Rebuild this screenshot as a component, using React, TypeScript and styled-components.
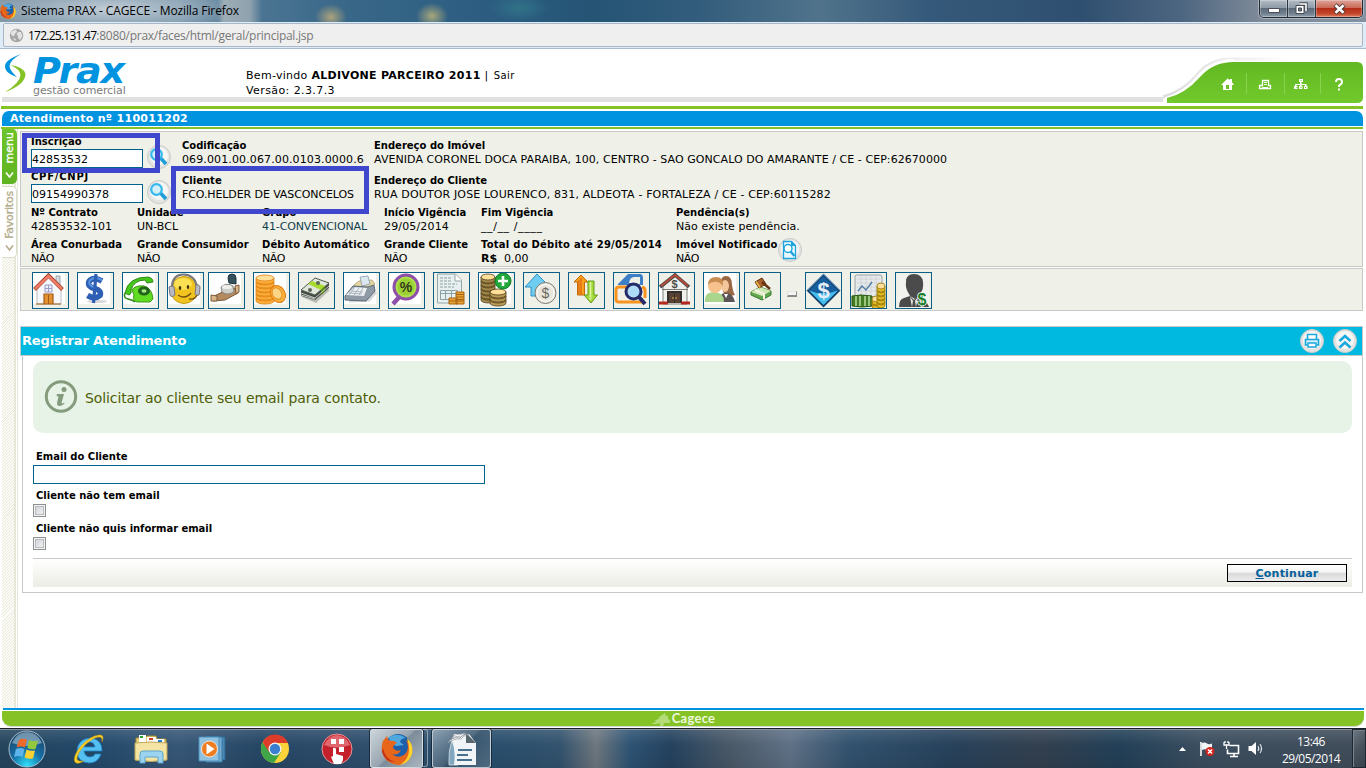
import React from "react";
import styled, { createGlobalStyle } from "styled-components";

const Global = createGlobalStyle`
  * { box-sizing: border-box; }
  body { margin: 0; background: #fff; overflow: hidden; }
  button, input { font: inherit; margin: 0; }
`;

const sans = `"DejaVu Sans", Verdana, sans-serif`;
const segoe = `"Open Sans", "Segoe UI", sans-serif`;

const Screen = styled.div`
  width: 1366px;
  height: 768px;
  display: flex;
  flex-direction: column;
  background: #fff;
  font: 11px/14px ${sans};
  color: #000;
  overflow: hidden;
`;

/* ---------- window chrome ---------- */

const TitleBar = styled.header`
  height: 22px;
  flex: none;
  display: flex;
  align-items: flex-start;
  justify-content: space-between;
  padding-right: 3px;
  background:
    radial-gradient(ellipse 130px 22px at 110px 9px, rgba(205, 214, 222, 0.85), rgba(170, 190, 205, 0.5) 60%, transparent),
    linear-gradient(90deg, transparent 218px, rgba(205, 205, 200, 0.55) 224px, rgba(200, 202, 200, 0.5) 250px, transparent 262px),
    radial-gradient(ellipse 16px 13px at 331px 17px, rgba(190, 172, 122, 0.85), transparent),
    radial-gradient(ellipse 16px 13px at 432px 16px, rgba(196, 184, 120, 0.8), transparent),
    radial-gradient(ellipse 30px 14px at 520px 8px, rgba(52, 125, 140, 0.7), transparent),
    linear-gradient(90deg, #8296a4 0, #7e97a9 180px, #4b7492 262px, #386788 350px, #2b5c80 500px, #255475 590px, #335d7c 700px, #50738b 820px, #35597a 930px, #2f4f70 1080px, #4c6580 1180px, #7e8a98 1260px, #8491a0 100%);
`;

const WindowTitle = styled.div`
  display: flex;
  align-items: center;
  gap: 5px;
  height: 21px;
  font: 12px/20px ${segoe};
  letter-spacing: -0.11px;
`;

const WindowButtons = styled.div`
  display: flex;
  height: 18px;
  border: 1px solid #1f2a35;
  border-top: 0;
  border-radius: 0 0 5px 5px;
  overflow: hidden;
  box-shadow: 0 0 0 1px rgba(255, 255, 255, 0.35);
`;

const WinButton = styled.button<{ $w: number; $close?: boolean }>`
  width: ${(p) => p.$w}px;
  padding: 0;
  display: flex;
  align-items: center;
  justify-content: center;
  border: 0;
  border-left: ${(p) => (p.$w === 27 ? "0" : "1px solid #2b3642")};
  box-shadow: inset 0 0 0 1px rgba(255, 255, 255, 0.28);
  background: ${(p) =>
    p.$close
      ? "linear-gradient(#dda59b 0, #cb6a58 45%, #b52d17 50%, #c4462a 80%, #dd8060)"
      : "linear-gradient(#b3bcc6 0, #8f9ba8 45%, #5d6a79 50%, #71808f 80%, #93a2b0)"};
`;

const UrlBar = styled.div`
  height: 27px;
  flex: none;
  padding: 1px 3px 2px;
  background: #dfebf7;
  border-bottom: 1px solid #a9bccd;
`;

const UrlField = styled.div`
  height: 24px;
  display: flex;
  align-items: center;
  gap: 4px;
  padding: 1px 0 0 5px;
  border: 1px solid #a6b8c7;
  border-radius: 2px;
  background: #efefef;
  color: #777;
  font: 12px/22px ${segoe};
  letter-spacing: -0.27px;
`;

const Host = styled.span`
  color: #000;
  letter-spacing: -0.75px;
`;

/* ---------- application header ---------- */

const AppHeader = styled.header`
  height: 54px;
  flex: none;
  display: flex;
  background: linear-gradient(#e0e0e0, #e0e0e0) 2px 48px / 1161px 5px no-repeat;
`;

const Logo = styled.div`
  width: 246px;
  display: flex;
  padding: 4px 0 0 4px;
`;

const Brand = styled.div`
  display: flex;
  flex-direction: column;
  padding-left: 5px;
`;

const BrandName = styled.div`
  height: 31px;
  font: italic 700 36px/35px ${sans};
  letter-spacing: -1.2px;
  transform: scaleX(1.06);
  transform-origin: left;
  color: #0093df;
`;

const BrandSub = styled.div`
  font-size: 11px;
  line-height: 14px;
  letter-spacing: -0.1px;
  color: #7c7c7c;
`;

const Welcome = styled.div`
  flex: 1;
  padding-top: 19px;
  line-height: 15px;
`;

const Spaced = styled.span<{ $ls?: number }>`
  letter-spacing: ${(p) => p.$ls ?? 0}px;
`;

const Strong = styled.b<{ $ls?: number }>`
  letter-spacing: ${(p) => p.$ls ?? 0}px;
`;

const SmallLink = styled.a`
  font-size: 10px;
  letter-spacing: 0.4px;
  margin-left: 1px;
`;

const HeaderArt = styled.svg`
  width: 206px;
  height: 54px;
  flex: none;
`;

const GreenRule = styled.div<{ $top?: number; $h: number }>`
  height: ${(p) => p.$h}px;
  flex: none;
  margin: ${(p) => p.$top ?? 0}px 3px 0 1px;
  background: #85c226;
`;

const CallBar = styled.h1`
  height: 15px;
  flex: none;
  margin: 2px 3px 0 2px;
  padding-left: 8px;
  border-radius: 7px 7px 0 0;
  background: #0093df;
  color: #fff;
  font: 700 11px/16px ${sans};
  letter-spacing: 0.3px;
`;

const Workspace = styled.div`
  flex: 1;
  min-height: 0;
  display: flex;
  padding-right: 3px;
`;

const SideBar = styled.nav`
  width: 18px;
  flex: none;
  padding-left: 2px;
  background:
    linear-gradient(90deg, #fff 2px, transparent 2px, transparent 14px, #e7e7d9 14px, #e7e7d9 16px, #fff 16px, #fff 17px, #e7e7d9 17px),
    repeating-linear-gradient(135deg, #fbfbf7 0, #fbfbf7 1.4px, #e9e8db 1.4px, #e9e8db 2.1px);
`;

const SideTab = styled.div<{ $active?: boolean }>`
  width: 15px;
  height: ${(p) => (p.$active ? 55 : 72)}px;
  margin-top: ${(p) => (p.$active ? 0 : 2)}px;
  display: flex;
  align-items: center;
  justify-content: flex-end;
  padding-bottom: ${(p) => (p.$active ? 5 : 5)}px;
  gap: ${(p) => (p.$active ? 8 : 5)}px;
  flex-direction: column;
  border: ${(p) => (p.$active ? "0" : "1px solid #dcdccb")};
  border-left: 0;
  border-radius: 0 5px 5px 0;
  background: ${(p) => (p.$active ? "linear-gradient(#6dc427, #5fb321)" : "#fff")};
  color: ${(p) => (p.$active ? "#fff" : "#b3ab8a")};
`;

const Vertical = styled.span<{ $ls: number; $size?: number }>`
  writing-mode: vertical-rl;
  transform: rotate(180deg);
  font-size: ${(p) => p.$size ?? 11}px;
  line-height: 13px;
  letter-spacing: ${(p) => p.$ls}px;
  -webkit-text-stroke: 0.3px;
`;

const Main = styled.main`
  flex: 1;
  padding: 2px 0 0 2px;
  min-width: 0;
`;

/* ---------- client panel ---------- */

const ClientPanel = styled.section`
  position: relative;
  height: 136px;
  padding: 2px 0 0 10px;
  border: 1px solid #c8c8c8;
  background: #eff0e8;
`;

const LookupRow = styled.div`
  display: flex;
  height: 35px;
`;

const LookupCell = styled.div`
  width: 151px;
  display: flex;
`;

const Field = styled.div<{ $w?: number; $top?: number }>`
  width: ${(p) => (p.$w ? p.$w + "px" : "auto")};
  padding-top: ${(p) => p.$top ?? 0}px;
  flex: none;
  white-space: nowrap;
`;

const Label = styled.div<{ $ls?: number }>`
  font-weight: 700;
  font-size: 10px;
  height: 14px;
  line-height: 14px;
  letter-spacing: ${(p) => p.$ls ?? 0}px;
`;

const Value = styled.div<{ $ls?: number; $teal?: boolean }>`
  height: 14px;
  line-height: 14px;
  letter-spacing: ${(p) => p.$ls ?? 0}px;
  color: ${(p) => (p.$teal ? "#12404c" : "#000")};
`;

const TextInput = styled.input<{ $w: number; $gap?: number }>`
  display: block;
  width: ${(p) => p.$w}px;
  height: 19px;
  margin-top: ${(p) => p.$gap ?? 0}px;
  padding: 2px 0 0;
  border: 1px solid #00628f;
  background: #fff;
  font: 11px/14px ${sans};
`;

const RoundButton = styled.button<{ $size: number }>`
  width: ${(p) => p.$size}px;
  height: ${(p) => p.$size}px;
  padding: 0;
  border: 0;
  background: none;
  display: block;
`;

const LookupSpacer = styled.div`
  padding: 11px 0 0 4px;
`;

const InfoRow = styled.div`
  display: flex;
  height: 32px;
`;

const LookupRows = styled.div`
  height: 72px;
`;

const Inline = styled.div`
  display: flex;
  align-items: flex-start;
  height: 28px;
`;

const Mark = styled.div<{ $x: number; $y: number; $w: number; $h: number }>`
  position: absolute;
  left: ${(p) => p.$x}px;
  top: ${(p) => p.$y}px;
  width: ${(p) => p.$w}px;
  height: ${(p) => p.$h}px;
  border: 5px solid #3f48cc;
`;

/* ---------- tool strip ---------- */

const ToolStrip = styled.section`
  height: 43px;
  margin-top: 1px;
  padding: 3px 0 0 11px;
  display: flex;
  border: 1px solid #c8c8c8;
  background: #eff0e8;
`;

const ToolButton = styled.button<{ $gap?: number }>`
  width: 37px;
  height: 37px;
  padding: 0;
  margin-right: ${(p) => p.$gap ?? 8}px;
  border: 1px solid #0b5f86;
  background: #eff0e8;
  display: block;
`;

const MissingTool = styled.i`
  width: 10px;
  height: 6px;
  margin: 19px 8px 0 2px;
  background: #f4f4f0;
  border: 1px solid #e4e4e0;
  border-right-color: #8a8a8a;
  border-bottom: 2px solid #8a8a8a;
`;

/* ---------- card ---------- */

const CardHeader = styled.header`
  height: 30px;
  margin-top: 15px;
  padding: 0 5px 0 1px;
  display: flex;
  align-items: center;
  gap: 9px;
  border: 1px solid #c8c8c8;
  background: #00b9e1;
`;

const CardTitle = styled.h2`
  flex: 1;
  margin: 0;
  font: 700 13px/16px ${sans};
  letter-spacing: -0.16px;
  color: #fff;
`;

const CardBody = styled.div`
  height: 237px;
  margin-left: 2px;
  padding: 5px 10px 0;
  border: 1px solid #c8c8c8;
  border-top: 0;
  display: flex;
  flex-direction: column;
`;

const Notice = styled.div`
  height: 72px;
  padding-left: 11px;
  display: flex;
  align-items: center;
  gap: 7px;
  border-radius: 10px;
  background: #e7f3e6;
  color: #4f5d07;
  font-size: 14px;
  line-height: 20px;
  letter-spacing: -0.1px;
`;

const NoticeText = styled.span`
  padding-top: 2px;
`;

const Form = styled.form`
  display: flex;
  flex-direction: column;
  align-items: flex-start;
  padding-top: 17px;
`;

const FormLabel = styled(Label)<{ $top?: number }>`
  margin-top: ${(p) => p.$top ?? 0}px;
  padding-left: 3px;
`;

const Check = styled.input`
  appearance: none;
  width: 13px;
  height: 13px;
  margin-top: 1px;
  border: 1px solid #8e8f8f;
  box-shadow: inset 0 0 0 1px #f4f4f4, inset 0 0 0 2px #b6b9be;
  background: linear-gradient(135deg, #cbcfd5, #f6f6f6);
`;

const ActionBar = styled.footer`
  height: 29px;
  margin-top: 8px;
  padding: 5px 5px 0 0;
  display: flex;
  justify-content: flex-end;
  border-top: 1px solid #c8c8c8;
  background: linear-gradient(#fff, #ecede4);
`;

const Continue = styled.button`
  width: 120px;
  height: 18px;
  padding: 0;
  border: 1px solid #000;
  background: linear-gradient(#fff 0, #f4f4f4 45%, #dadada 52%, #ececec);
  color: #05609a;
  font: 700 11px/18px ${sans};
  letter-spacing: 0.22px;
`;

/* ---------- footer and taskbar ---------- */

const BlueRule = styled.div`
  height: 2px;
  flex: none;
  margin: 0 2px 0 3px;
  background: #0093df;
`;

const AppFooter = styled.footer`
  height: 15px;
  flex: none;
  margin: 1px 2px 2px;
  display: flex;
  align-items: center;
  justify-content: center;
  gap: 1px;
  border-radius: 0 0 9px 9px;
  background: #85c226;
  box-shadow: 0 1px 0 #d3d6d0;
  color: #eef8dc;
  font: 700 13px/15px Lato, sans-serif;
  letter-spacing: 0.25px;
`;

const TaskBar = styled.div`
  height: 40px;
  flex: none;
  display: flex;
  align-items: flex-start;
  border-top: 1px solid #1a1f26;
  box-shadow: inset 0 1px 0 #8795a2;
  background:
    linear-gradient(rgba(255,255,255,0.12), rgba(255,255,255,0) 40%, rgba(0,0,0,0.08)),
    linear-gradient(90deg, #25455d 0, #22496a 90px, #375777 180px, #264765 260px, #2f4f6d 370px, #2a4f6d 500px, #33536e 560px, #6e777f 596px, #2e5474 630px, #24425f 670px, #4a5968 730px, #5f7186 790px, #32526e 850px, #27425c 950px, #33404f 1040px, #224058 1120px, #3b4e5f 1200px, #414d5a 1366px);
`;

const TaskItem = styled.div<{ $w: number; $active?: boolean; $open?: boolean }>`
  width: ${(p) => p.$w}px;
  height: 39px;
  display: flex;
  align-items: center;
  justify-content: center;
  border: ${(p) => (p.$active || p.$open ? "1px solid rgba(225,232,238,0.75)" : "0")};
  border-radius: 3px;
  box-shadow: ${(p) => (p.$active || p.$open ? "0 0 0 1px rgba(10,20,30,0.6)" : "none")};
  background: ${(p) =>
    p.$active
      ? "linear-gradient(135deg, #cdd5db 0, #98a5b0 48%, #7d8c99 52%, #a9b6c0)"
      : p.$open
        ? "linear-gradient(135deg, rgba(190,203,213,.6) 0, rgba(110,128,143,.45) 48%, rgba(70,92,110,.4) 52%, rgba(120,140,155,.5))"
        : "none"};
`;

const Stack = styled.div`
  width: 5px;
  height: 38px;
  margin-right: 4px;
  border: 1px solid rgba(200, 210, 218, 0.6);
  border-left: 0;
  border-radius: 0 3px 3px 0;
`;

const Tray = styled.div`
  margin-left: auto;
  height: 39px;
  display: flex;
  align-items: center;
`;

const Clock = styled.div`
  width: 78px;
  margin-right: 2px;
  padding-top: 2px;
  text-align: center;
  white-space: nowrap;
  color: #fff;
  font: 12px/17px ${segoe};
  letter-spacing: -0.55px;
`;

const ShowDesktop = styled.div`
  width: 14px;
  height: 39px;
  border: 1px solid #1f2831;
  box-shadow: inset 1px 1px 0 #76828e;
  background: linear-gradient(135deg, #6d7883, #47525d 50%, #37424d);
`;

/* ---------- small drawings ---------- */

const Firefox = ({ s }: { s: number }) => (
  <svg width={s} height={s} viewBox="0 0 32 32">
    <circle cx="17" cy="14" r="13" fill="#1d5fa8" />
    <path d="M8 4q9-5 17 1-5 0-6 4l4 3-8 1-6-3z" fill="#4fa9df" />
    <path d="M2 8l4-5q0 3 3 5 4-1 7 2-4 2-4 5 3 4 8 2-3 6-9 4 7 6 14-1 4-6 0-13 7 4 6 13-2 10-13 12Q4 31 1 19q-1-6 1-11z" fill="#e8661b" />
    <path d="M26 5q7 7 5 16-3 9-12 11 9-6 9-15 0-7-2-12z" fill="#fcd22f" />
    <path d="M2 15q2 11 12 14-10 0-13-10z" fill="#c2321a" />
  </svg>
);

const Globe = () => (
  <svg width="15" height="15" viewBox="0 0 15 15">
    <circle cx="7.5" cy="7.5" r="6.8" fill="#a7a7a7" />
    <path d="M3 3l4-1.500 1 2-2 2-1 3-2-1-1.500-2zM9 4l3 0 1.500 4-2.500 4-2-2 0-2-1.500-2zM4 10l3 1-1 2z" fill="#e3e3e3" />
  </svg>
);

const Swirl = () => (
  <svg width="24" height="40" viewBox="0 0 24 40">
    <path d="M17 1Q-3 8 2 17 4 21 13 24 6 18 5.500 13 6 7 17 1z" fill="#0093df" />
    <path d="M6 12q10 4 10.500 10Q16 30 1 39 21 32 21.500 21 20 14 6 12z" fill="#85c226" />
  </svg>
);

const HeaderShape = () => (
  <HeaderArt viewBox="0 0 206 54">
    <defs>
      <linearGradient id="hg" x1="0" y1="0" x2="0" y2="1">
        <stop offset="0" stopColor="#62b821" />
        <stop offset="1" stopColor="#72c92c" />
      </linearGradient>
      <linearGradient id="hs" x1="0" y1="0" x2="1" y2="0">
        <stop offset="0" stopColor="#dcdcdc" />
        <stop offset=".5" stopColor="#ececec" />
        <stop offset="1" stopColor="#fff" />
      </linearGradient>
    </defs>
    <path d="M3 48Q24 42 37 26 49 10 72 10H130" fill="none" stroke="url(#hs)" strokeWidth="3" />
    <path d="M5 50Q25 44 38.500 27.500 51 12 74 11.500" fill="none" stroke="#fff" strokeWidth="3" />
    <path d="M7 54V49Q25 45 40 28 53 13 74 13H197q6 0 6 6V48q0 6-6 6z" fill="url(#hg)" />
    <path d="M86.500 24v21M124.500 24v21M160.500 24v21" stroke="#87d34b" />
    <g fill="#fff">
      <path d="M61 36l6.500-6.500L70 31v-1h2v3l2 3h-2v5h-9v-5z" />
      <path d="M66 36h3v4h-3z" fill="#69bf25" />
      <path d="M102.500 31.500h6v5h2v3h-11v-3h3z" fill="none" stroke="#fff" strokeWidth="1.300" />
      <path d="M104 33.500h3M104 35.500h3M102 38.500h6" stroke="#fff" strokeWidth=".9" />
      <path d="M139 30h4v3h-1.500v2h5v2h1v3h-3.500v-3h1v-1h-3.500v1h1v3h-3.500v-3h1v-1h-3.500v1h1v3h-3.500v-3h1v-2h5v-2h-1z" />
      <path d="M140.500 31h1v1h-1zM136.500 38h1v1h-1zM140.500 38h1v1h-1zM145 38h1v1h-1z" fill="#69bf25" />
    </g>
    <path d="M176 33q0-3 3-3t3 3q0 2-3 3.500v1.500M179 39.500v2" stroke="#fff" strokeWidth="1.900" fill="none" />
  </HeaderArt>
);

const Disc = () => (
  <>
    <circle cx="12" cy="12" r="11.500" fill="#e4e5e2" stroke="#c9cac8" />
    <circle cx="12" cy="11" r="9" fill="#f6f6f5" />
  </>
);

const Lens = () => (
  <svg width="24" height="24" viewBox="0 0 24 24">
    <Disc />
    <circle cx="9.500" cy="9.500" r="5.300" fill="#d3effa" stroke="#35b8ec" strokeWidth="2.200" />
    <path d="M14 13.500l5 5.500" stroke="#1f9fd8" strokeWidth="3.600" />
  </svg>
);

const DocLens = () => (
  <svg width="24" height="24" viewBox="0 0 24 24">
    <Disc />
    <path d="M5.500 3.500h8l4 4v13h-12z" fill="#e9f8fe" stroke="#1ea4dd" strokeWidth="1.300" />
    <path d="M13 3v5h5z" fill="#1ea4dd" />
    <circle cx="10" cy="10.500" r="4" fill="#fff" stroke="#1ea4dd" strokeWidth="1.500" />
    <path d="M12.500 13.500l4 4.500" stroke="#1ea4dd" strokeWidth="2.400" />
  </svg>
);

const PrintDisc = () => (
  <svg width="24" height="24" viewBox="0 0 24 24">
    <Disc />
    <path d="M7.500 10.500V5.500h9v5" fill="#fff" stroke="#19a9dd" strokeWidth="1.600" />
    <path d="M5.500 10.500h13v5.500h-13z" fill="#d4f0fa" stroke="#19a9dd" strokeWidth="1.600" />
    <path d="M8 14h8v4H8z" fill="#fff" stroke="#19a9dd" strokeWidth="1.400" />
  </svg>
);

const UpDisc = () => (
  <svg width="24" height="24" viewBox="0 0 24 24">
    <Disc />
    <path d="M6.500 12L12 7l5.500 5M6.500 18.500l5.500-5 5.500 5" fill="none" stroke="#19a9dd" strokeWidth="2.600" />
  </svg>
);

const InfoIcon = () => (
  <svg width="34" height="34" viewBox="0 0 34 34">
    <circle cx="17" cy="16.500" r="14.700" fill="none" stroke="#859b7d" strokeWidth="3" />
    <circle cx="20" cy="9.500" r="2.500" fill="#859b7d" />
    <path d="M13 14h7l-2.500 9q.5 1 2.500-.5l.5 1q-3 3-6 2.500-2-.8-1.500-3l1.500-6.500-2-.6z" fill="#859b7d" />
  </svg>
);

const Chevron = () => (
  <svg width="9" height="8" viewBox="0 0 9 8">
    <path d="M1 1.500l3.500 4.500L8 1.500" fill="none" stroke="currentColor" strokeWidth="1.600" />
  </svg>
);

const White = () => <path d="M0 0h32v31H0z" fill="#fff" />;
const Coins = ({ x, y, n, r = 7, c = "#fdb640", d = "#c97a10" }: { x: number; y: number; n: number; r?: number; c?: string; d?: string }) => (
  <g>
    {Array.from({ length: n }, (_, i) => (
      <g key={i} stroke={d} strokeWidth=".8">
        <path d={`M${x - r} ${y - i * 4}v3a${r} 3 0 0 0 ${r * 2} 0v-3z`} fill={c} />
        <ellipse cx={x} cy={y - i * 4} rx={r} ry="3" fill={i === n - 1 ? "#ffe09a" : c} />
      </g>
    ))}
  </g>
);

const Glyph = ({ x, y, s, fill, children, w = 700 }: { x: number; y: number; s: number; fill: string; children: string; w?: number }) => (
  <text x={x} y={y} fontSize={s} fill={fill} fontWeight={w} textAnchor="middle" fontFamily="Liberation Sans">{children}</text>
);

const drawings: Record<string, React.ReactNode> = {
  Início: (
    <>
      <White />
      <path d="M23 3h4v9h-4z" fill="#d6dbe0" stroke="#8a949c" strokeWidth=".8" />
      <path d="M4 14L15.500 4 28 14v17H4z" fill="#f6f8fb" stroke="#aab0b8" strokeWidth=".8" />
      <path d="M1.500 16.500L15.500 2.500l14 14" fill="none" stroke="#a84832" strokeWidth="4" />
      <path d="M2 16L15.500 3l13.500 13" fill="none" stroke="#ee7b66" strokeWidth="2.600" />
      <path d="M12 12h7v7h-7zM15.500 12v7M12 15.500h7" fill="#edf0fb" stroke="#9a9cc8" strokeWidth="1" />
      <path d="M11 21h9v10h-9z" fill="#e39232" stroke="#a65c16" strokeWidth="1.200" />
      <path d="M15.500 22v9M3 31h8M20 31h8" stroke="#a65c16" strokeWidth="1" />
    </>
  ),
  Financeiro: (
    <>
      <White />
      <ellipse cx="19" cy="28.500" rx="10" ry="1.600" fill="#d7d7d7" />
      <path d="M24 8Q15 3 11 8.500q-2 5 5.500 7t5.500 7Q17 27 9.500 22.500" fill="none" stroke="#2f5fb4" strokeWidth="5.600" />
      <path d="M24 7Q15 2.500 11.500 8q-2 4.500 5.500 6.500" fill="none" stroke="#5a92e2" strokeWidth="2" />
      <path d="M18 1l-2.500 29" stroke="#2f5fb4" strokeWidth="3.200" />
    </>
  ),
  Telefone: (
    <>
      <White />
      <path d="M9 17q3-5 12-4 8 2 9 13l-3 3H14q-5-2-3-7z" fill="#5fdb22" stroke="#3d9717" />
      <ellipse cx="21" cy="18" rx="6" ry="4.500" fill="#23641c" />
      <ellipse cx="21" cy="18" rx="2.500" ry="1.800" fill="#a5ea83" />
      <path d="M2 20Q5 4 25 4q5 1 5 5l-6 1-2-3Q11 7 8 17q1 4-2 5z" fill="#46c71b" stroke="#2e8914" />
      <path d="M2 20q-2 5 3 6t7 3" fill="none" stroke="#2e8914" strokeWidth="1.600" />
    </>
  ),
  Suporte: (
    <>
      <White />
      <circle cx="16" cy="17" r="13.500" fill="#f0c31f" stroke="#c79a12" />
      <ellipse cx="15" cy="11" rx="9" ry="6" fill="#fbe053" />
      <path d="M4 13Q5 1 16 1.500T29 14" fill="none" stroke="#77777c" strokeWidth="2.200" />
      <path d="M1 14q3-2 5 0l1 8q-4 3-5 0zM28 12q4-1 4 3l-1 7q-3 1-4-1z" fill="#b9b9c2" stroke="#78787e" />
      <ellipse cx="12" cy="15" rx="1.300" ry="2" fill="#45330b" />
      <ellipse cx="20" cy="14" rx="1.300" ry="2" fill="#45330b" />
      <path d="M10 22q7 5 13-2M29 22q-2 5-8 4" fill="none" stroke="#75500c" strokeWidth="1.400" />
    </>
  ),
  Hidrômetro: (
    <>
      <White />
      <path d="M3 24l17-8 9-1v5l-13 7-12 1z" fill="#b48b60" stroke="#7e5a38" />
      <path d="M2 22l6 1v5l-6 0zM26 13l4-1v7l-3 2z" fill="#d7b78a" stroke="#7e5a38" />
      <path d="M12 14q6-5 12-1l1 6q-7 4-12 0z" fill="#cfcfc9" stroke="#86867f" />
      <path d="M19 5q0-4 4-4t4 4v6l-7-1z" fill="#35525c" stroke="#1e343c" />
      <ellipse cx="18" cy="14" rx="5" ry="2" fill="#efefec" />
    </>
  ),
  Tarifas: (
    <>
      <White />
      <Coins x={11} y={25} n={6} r={9} c="#fbb03b" d="#e07d12" />
      <ellipse cx="24" cy="21" rx="7" ry="9" transform="rotate(-30 24 21)" fill="#fbb03b" stroke="#e07d12" />
      <ellipse cx="23" cy="20.500" rx="4.500" ry="6" transform="rotate(-30 23 20.500)" fill="#fdd685" stroke="#e58f24" />
    </>
  ),
  Pagamento: (
    <>
      <path d="M3 24l14 6 14-13-3-1z" fill="#b9bbb4" />
      <path d="M2 18L16 6l14 4v5L16 27 2 23z" fill="#444b44" />
      <path d="M2 17L16 5l14 5-14 12z" fill="#dfe6da" stroke="#4f5a4f" />
      <path d="M9 11l4-3 13 5-4 4z" fill="#a7dc2f" />
      <path d="M22 17l4-4v5l-4 4z" fill="#5c8b17" />
      <path d="M2 20l14 5L30 13M2 22l14 4" fill="none" stroke="#e6e9e3" strokeWidth=".8" />
      <circle cx="19" cy="10" r="2" fill="#5a665a" /><circle cx="11" cy="17" r="2" fill="#5a665a" />
    </>
  ),
  Caixa: (
    <>
      <White />
      <path d="M5 28l20-1 7-8" fill="none" stroke="#d5d7d8" strokeWidth="3" />
      <path d="M10 12l5-4 13-1 3 4-6 6-14-1z" fill="#e5d6a0" stroke="#a99c70" strokeWidth=".8" />
      <path d="M16 4l8-1 2 8-8 2z" fill="#dce8f0" stroke="#889aa8" strokeWidth=".8" />
      <path d="M1 23l8-10 15 1 6-2 1 6-9 10-21-1z" fill="#8e9aa6" stroke="#5f6a74" />
      <path d="M2 22l8-8 13 1-3 8z" fill="#eef1f3" />
      <path d="M7 18l12 1M5 20l13 1M11 14l-6 8M15 15l-5 7M19 15l-4 7" stroke="#9aa7b0" strokeWidth=".8" />
    </>
  ),
  Desconto: (
    <>
      <White />
      <path d="M12 22l-8 9" stroke="#8d4fa8" strokeWidth="4.500" />
      <circle cx="17" cy="14" r="12" fill="#aee04b" stroke="#8d4fa8" strokeWidth="3" />
      <circle cx="17" cy="14" r="8.500" fill="#9bd032" />
      <Glyph x={17} y={19} s={14} fill="#333b1c">%</Glyph>
    </>
  ),
  Fatura: (
    <>
      <path d="M3.500 1h18l6 6v23h-24z" fill="#e8efef" stroke="#90a6a9" />
      <path d="M21 1v7h7" fill="#fff" stroke="#90a6a9" />
      <path d="M6 5h11M6 8h12M6 11h17M6 14h14" stroke="#8ba1a5" strokeDasharray="3 1" />
      <path d="M6.500 17.500h17v9h-17zM11.500 17v9M17.500 17v9M6 20.500h17" fill="none" stroke="#8ba1a5" />
      <path d="M22 19h8v12h-8zM15 25h8v6h-8z" fill="#e8a233" stroke="#a76513" />
      <path d="M22 21.500h8M22 24h8M22 26.500h8M15 28h15" stroke="#a76513" />
    </>
  ),
  "Novo débito": (
    <>
      <White />
      <Coins x={9} y={24} n={6} r={7} c="#a58a4d" d="#4f3d18" />
      <Coins x={19} y={27} n={3} r={8} c="#b99a57" d="#4f3d18" />
      <circle cx="24" cy="8" r="8" fill="#22a83a" stroke="#118126" />
      <path d="M24 3v10M19 8h10" stroke="#fff" strokeWidth="2.600" />
    </>
  ),
  Valorização: (
    <>
      <path d="M1 14L13 1l13 13h-6v9H7v-9z" fill="#6fcdf2" stroke="#2d91c4" />
      <circle cx="21.500" cy="20" r="10.500" fill="#e8e6dc" stroke="#7b7b72" />
      <circle cx="21.500" cy="20" r="8.500" fill="none" stroke="#fff" />
      <Glyph x={21.500} y={25} s={14} fill="#68685e" w={400}>$</Glyph>
    </>
  ),
  Transferência: (
    <>
      <path d="M5 9l7-7 7 7h-3.500v13h-7V9z" fill="#f6a01e" stroke="#c46a08" />
      <path d="M10 7v14M12 5v17" stroke="#d95c12" />
      <path d="M19 8h6v14h3.500l-6.500 8-7-8h4z" fill="#a4da3d" stroke="#679c18" />
      <path d="M21.500 9v18" stroke="#dbf39a" strokeWidth="1.600" />
    </>
  ),
  Pesquisa: (
    <>
      <path d="M4 11L14 1h12q3 0 3 4v7H4z" fill="#3e80c8" />
      <path d="M15 10q1-6 5-6h6v7z" fill="#eff0e8" />
      <path d="M17 14H5q-3 0-3 3v9q0 3 3 3h24M28 14q3 1 3 3v8" fill="none" stroke="#f7931e" strokeWidth="3" />
      <circle cx="19.500" cy="18.500" r="7.500" fill="#aedcf8" stroke="#252b68" strokeWidth="3" />
      <path d="M25 24l6 7" stroke="#252b68" strokeWidth="4" />
    </>
  ),
  Banco: (
    <>
      <path d="M0 14h31v17H0z" fill="#fff" />
      <path d="M4 13L16 3l12 10v18H4z" fill="#f0f0ee" stroke="#81817d" />
      <path d="M1 14L16 2l14 12" fill="none" stroke="#4c4c4c" strokeWidth="3.600" />
      <path d="M2 13L16 2l13 11" fill="none" stroke="#ba4a37" strokeWidth="1.800" />
      <Glyph x={15.500} y={15} s={11} fill="#4e4e4a">$</Glyph>
      <path d="M3 16.500h26" stroke="#7a7a77" />
      <path d="M8 18h15v12H8z" fill="#352f2e" />
      <path d="M10 20h5v10h-5zM16 20h5v10h-5z" fill="#594133" />
      <path d="M0 30h9M22 30h9" stroke="#b3291b" strokeWidth="3" />
      <path d="M14 24v2M17 24v2" stroke="#e2b14a" />
    </>
  ),
  Clientes: (
    <>
      <White />
      <path d="M17 12q-1-9 5-9t6 9q1 7 3 10l-10 2z" fill="#9a6843" />
      <path d="M14 29q1-9 8-9t9 9z" fill="#5b5557" />
      <ellipse cx="21" cy="13" rx="4" ry="6" fill="#f3c79a" />
      <path d="M1 29q-1-10 9-10t10 10z" fill="#a9d58c" />
      <circle cx="11" cy="13" r="7" fill="#f6c18d" />
      <path d="M4 12Q4 4 12 4t7 9q-4-5-9-4-4 0-6 3z" fill="#c88d51" />
      <path d="M20 21l2 4 2-4z" fill="#fff" />
    </>
  ),
  Leilão: (
    <>
      <path d="M6 19l9-5 11 4v4l-9 5-11-5z" fill="#5fa64c" stroke="#3c7a31" />
      <path d="M6 19l9-5 11 4-9 5z" fill="#cfe8b4" />
      <path d="M10 17l9 4v5" stroke="#f4f4e4" strokeWidth="2" fill="none" />
      <path d="M10 9l7-4 4 6-7 4z" fill="#a9622b" stroke="#64330f" />
      <path d="M17 9l8 7" stroke="#64330f" strokeWidth="2.400" />
      <path d="M11 8.500l4 6" stroke="#efb54a" strokeWidth="1.500" />
    </>
  ),
  Cobrança: (
    <>
      <path d="M17.500 0.500L34.500 17.500l-17 17-17-17z" fill="#123b66" />
      <path d="M17.500 3L32 17.500 17.500 32 3 17.500z" fill="#175f9c" />
      <path d="M3 17.500L17.500 32 32 17.500q-15 6-29 0z" fill="#43bdec" />
      <path d="M17.500 1L34 17.500M17.500 1L1 17.500" stroke="#8fc7ea" strokeWidth="1" />
      <Glyph x={17.500} y={25} s={22} fill="#e4edf5">$</Glyph>
    </>
  ),
  Relatórios: (
    <>
      <path d="M5 2h24q2 0 2 2v20H4V3z" fill="#e6e9ea" stroke="#9aa3a6" />
      <path d="M6 6h23M6 10h23M6 14h23M6 18h23M10 3v20M15 3v20M20 3v20M25 3v20" stroke="#c8cfd1" strokeWidth=".7" />
      <path d="M7 18l4-5 4 4 6-8" fill="none" stroke="#4d7ca8" strokeWidth="1.300" />
      <path d="M1 23l9-1 11 1 1 10-11 1-10-1z" fill="#447d24" stroke="#2a5712" />
      <path d="M5 23v10M9 23v10M14 23v10M18 23v10" stroke="#b2d796" strokeWidth="1.600" />
      <Coins x={25} y={30} n={2} r={4} c="#e4bd27" d="#927406" />
      <Coins x={30} y={29} n={5} r={4} c="#e4bd27" d="#927406" />
    </>
  ),
  Devedor: (
    <>
      <path d="M2 2h31v31H2z" fill="#f2f2ee" />
      <path d="M10 9q0-8 8-8t9 8q1 7-3 12l-1 2-4 3-5-3-1-2q-4-6-3-12z" fill="#4b4b4b" />
      <path d="M3 34q0-8 5-9l6-2 4 4 4-4 7 3 4 8z" fill="#4b4b4b" />
      <path d="M14 24l4 5 4-5-2 10h-4z" fill="#e9e9e5" />
      <path d="M17 28h2l1 6h-4z" fill="#4b4b4b" />
      <text x="26" y="32" fontSize="16" fontWeight="700" fill="#1c7d2b" stroke="#fff" strokeWidth="1.500" paintOrder="stroke" textAnchor="middle" fontFamily="Liberation Sans">$</text>
    </>
  ),
};

const ToolSvg = styled.svg`
  display: block;
  width: 35px;
  height: 35px;
`;

const Tool = ({ name, gap }: { name: string; gap?: number }) => (
  <ToolButton $gap={gap} aria-label={name}>
    <ToolSvg viewBox="0 0 35 35">{drawings[name]}</ToolSvg>
  </ToolButton>
);

const Windows = () => (
  <svg width="40" height="38" viewBox="0 0 40 38">
    <defs>
      <radialGradient id="orb" cx=".5" cy=".95" r=".95">
        <stop offset="0" stopColor="#2fe0fb" />
        <stop offset=".45" stopColor="#1670a8" />
        <stop offset="1" stopColor="#1b3e60" />
      </radialGradient>
    </defs>
    <circle cx="20" cy="19" r="18" fill="url(#orb)" stroke="#a9c0d0" strokeWidth="1" />
    <path d="M5 13q5-11 15-11t15 11q-15 6-30 0z" fill="#a9c6d9" opacity=".6" />
    <path d="M12 10q4-2 8-.500l-2 8q-4-2-8.500 0z" fill="#ee6a2a" />
    <path d="M22 10q4 2 9 .5l-2.500 8.500q-4 1-8-1z" fill="#93c83d" />
    <path d="M9 19q4-2 8.500 0l-2 8q-4-2-8.500 0z" fill="#5db4ea" />
    <path d="M19.500 19.500q4 2 8.500 1l-2 8q-4 1-8.500-1z" fill="#fbd033" />
  </svg>
);

const Explorer = () => (
  <svg width="32" height="32" viewBox="0 0 32 32">
    <path d="M29 18H11q1 6 6 6 4 0 5-3h6q-3 9-12 9Q4 29 4 18 5 6 17 5q12 1 12 13zM11 14h11q-1-5-5.500-5T11 14z" fill="#54bff1" stroke="#2385c9" strokeWidth=".8" />
    <path d="M29 9Q32 1 26 2 17 3 8 13-1 24 2 29q2 3 9-1-6 1-7-2Q4 20 12 12 22 3 27 4q3 1 2 5z" fill="#f9cf26" stroke="#c8940b" strokeWidth=".5" />
  </svg>
);

const Folder = () => (
  <svg width="34" height="32" viewBox="0 0 34 32">
    <path d="M2 5h9l2-2h9l1 3h9v21H2z" fill="#e7ce78" stroke="#a98d35" />
    <path d="M5 2h7v8H5zM13 4h9v8h-9zM22 6h8v7h-8z" fill="#fff" />
    <path d="M6 3h3v2H6z" fill="#25a13b" /><path d="M15 5h4v2h-4z" fill="#d23b2a" /><path d="M24 7h4v2h-4z" fill="#2a7dd2" />
    <path d="M1 10q16-2 32 0v17q-16 3-32 0z" fill="#f4e4a3" stroke="#c0a658" />
    <path d="M6 30V21q0-3 3-3h17q3 0 3 3v9h-5v-6H11v6z" fill="#9cd4f0" stroke="#5da4cc" />
  </svg>
);

const Player = () => (
  <svg width="30" height="30" viewBox="0 0 30 30">
    <path d="M12 3h16v23H12z" fill="#4a87b3" stroke="#2d6690" />
    <path d="M9 3h16v25H9z" fill="#76aed2" stroke="#3b79a6" />
    <path d="M2 3h20v24H2z" fill="#8fc2e1" stroke="#4b8bb7" />
    <circle cx="12.500" cy="15" r="8" fill="#ee7d22" stroke="#fff" strokeWidth=".7" />
    <path d="M9.500 9.500l8 5.500-8 5.500z" fill="#fff" />
  </svg>
);

const Chrome = () => (
  <svg width="30" height="30" viewBox="0 0 30 30">
    <circle cx="15" cy="15" r="14" fill="#fbd43b" />
    <path d="M2.700 8.200A14 14 0 0 0 14 29l7-11-11 0z" fill="#3fa648" />
    <path d="M2.700 8.200A14 14 0 0 1 28 9H15l-6 9z" fill="#de3c2b" />
    <circle cx="15" cy="15" r="6.500" fill="#f4f4f4" />
    <circle cx="15" cy="15" r="5.200" fill="#3a7fd0" />
  </svg>
);

const RedHand = () => (
  <svg width="32" height="32" viewBox="0 0 32 32">
    <circle cx="16" cy="16" r="15" fill="#c4202c" stroke="#e4949a" />
    <path d="M3 12Q8 2 16 2t13 10q-13 5-26 0z" fill="#e0666e" />
    <path d="M10 6h5v5h-5zM18 6h5v5h-5zM18 14h5v5h-5z" fill="#fff" />
    <path d="M12 15q2-1 3 1v5l7 2v4l-2 4h-7l-3-7 2-1z" fill="#fff" />
  </svg>
);

const Writer = () => (
  <svg width="32" height="34" viewBox="0 0 32 34">
    <path d="M6 8Q2 20 3 33h9V8z" fill="#82a6bd" stroke="#c1d2dd" />
    <path d="M8 2h15l7 9v22H8q2-14-2-24z" fill="#f1f4f6" />
    <path d="M20 1l10 10H20z" fill="#58666e" />
    <path d="M1 12Q6 4 14 6q4-5 9-3-6 0-8 4-8-1-14 5zM5 7Q9 1 14 3q3-3 7-1-5 0-6 3-5-2-10 2z" fill="#fff" stroke="#67737a" strokeWidth=".5" />
    <path d="M12 18h14M11 23h11M11 28h15" stroke="#47708e" strokeWidth="2" />
  </svg>
);

const TrayIcons = () => (
  <svg width="98" height="30" viewBox="0 0 98 30">
    <path d="M5 17l3.500-4 3.500 4z" fill="#fff" />
    <path d="M27 8v14" stroke="#fff" strokeWidth="1.600" />
    <path d="M28 9q3-1 5 .5t5 0v7q-3 1-5-.5t-5 0z" fill="#f2f4f5" />
    <circle cx="36" cy="17.500" r="4.500" fill="#d4241c" />
    <path d="M34 15.500l4 4M38 15.500l-4 4" stroke="#fff" strokeWidth="1.500" />
    <path d="M55.500 11.500h9v8h-11v-4M60 20v2M56 22.500h8" fill="none" stroke="#fff" strokeWidth="1.600" />
    <path d="M50 8v3h5V8M52.500 11v4M51 7v2M54 7v2" fill="none" stroke="#fff" strokeWidth="1.300" />
    <path d="M74.500 12h3l4.500-4v13l-4.500-4h-3z" fill="#fff" />
    <path d="M84 12q1.500 2.500 0 5M86 10q3 4.500 0 9" fill="none" stroke="#e4e9ec" strokeWidth="1.100" />
  </svg>
);

const CagecePine = () => (
  <svg width="20" height="14" viewBox="0 0 20 14">
    <path d="M0 12l6-3-3 0 6-3-2 0 7-5 1 3 2 0 0 3 2 1 0 3-6 0-1 3h-3l0-3-4 1z" fill="#b4dc78" />
  </svg>
);

const tools = [
  { name: "Início" }, { name: "Financeiro" }, { name: "Telefone" }, { name: "Suporte", gap: 4 },
  { name: "Hidrômetro" }, { name: "Tarifas" }, { name: "Pagamento" }, { name: "Caixa" },
  { name: "Desconto" }, { name: "Fatura" }, { name: "Novo débito" }, { name: "Valorização" },
  { name: "Transferência" }, { name: "Pesquisa" }, { name: "Banco" }, { name: "Clientes", gap: 4 },
  { name: "Leilão", gap: 4 },
];

export default function App() {
  return (
    <Screen>
      <Global />
      <TitleBar>
        <WindowTitle><Firefox s={16} />Sistema PRAX - CAGECE - Mozilla Firefox</WindowTitle>
        <WindowButtons>
          <WinButton $w={27} aria-label="Minimizar">
            <svg width="12" height="12" viewBox="0 0 12 12"><path d="M.5 5.500h11v4H.5z" fill="#fff" stroke="#4a4f55" /></svg>
          </WinButton>
          <WinButton $w={28} aria-label="Restaurar">
            <svg width="13" height="13" viewBox="0 0 13 13">
              <path d="M4.500 2h6.500v7" fill="none" stroke="#444b52" strokeWidth="3.400" />
              <path d="M4.500 2h6.500v7" fill="none" stroke="#fff" strokeWidth="1.600" />
              <path d="M1 3.500h8v8H1z" fill="#fff" stroke="#444b52" />
              <path d="M3.500 6h3v3h-3z" fill="#6d7a88" stroke="#444b52" />
            </svg>
          </WinButton>
          <WinButton $w={47} $close aria-label="Fechar">
            <svg width="13" height="12" viewBox="0 0 13 12">
              <path d="M2 2l9 8M11 2l-9 8" stroke="#50383a" strokeWidth="4.400" />
              <path d="M2.500 2.300l8 7.400M10.500 2.300l-8 7.400" stroke="#fff" strokeWidth="2.600" />
            </svg>
          </WinButton>
        </WindowButtons>
      </TitleBar>
      <UrlBar>
        <UrlField>
          <Globe />
          <span><Host>172.25.131.47</Host>:8080/prax/faces/html/geral/principal.jsp</span>
        </UrlField>
      </UrlBar>

      <AppHeader>
        <Logo>
          <Swirl />
          <Brand>
            <BrandName>Prax</BrandName>
            <BrandSub>gestão comercial</BrandSub>
          </Brand>
        </Logo>
        <Welcome>
          <div>
            <Spaced $ls={0.3}>Bem-vindo </Spaced>
            <Strong $ls={0.28}>ALDIVONE PARCEIRO 2011</Strong>
            <Spaced $ls={0.5}> | </Spaced>
            <SmallLink>Sair</SmallLink>
          </div>
          <Spaced $ls={0.41}>Versão: 2.3.7.3</Spaced>
        </Welcome>
        <HeaderShape />
      </AppHeader>
      <GreenRule $top={3} $h={3} />
      <CallBar>Atendimento nº 110011202</CallBar>
      <GreenRule $top={1} $h={2} />

      <Workspace>
        <SideBar>
          <SideTab $active><Vertical $ls={0}>menu</Vertical><Chevron /></SideTab>
          <SideTab><Vertical $ls={-0.2}>Favoritos</Vertical><Chevron /></SideTab>
        </SideBar>
        <Main>
          <ClientPanel>
            <LookupRows>
              <LookupRow>
                <LookupCell>
                  <Field $w={112} $top={1}><Label>Inscrição</Label><TextInput $w={112} defaultValue="42853532" /></Field>
                  <LookupSpacer><RoundButton $size={24} aria-label="Buscar inscrição"><Lens /></RoundButton></LookupSpacer>
                </LookupCell>
                <Field $w={192} $top={5}><Label>Codificação</Label><Value $ls={0.12}>069.001.00.067.00.0103.0000.6</Value></Field>
                <Field $top={5}>
                  <Label>Endereço do Imóvel</Label>
                  <Value $ls={0.06}>AVENIDA CORONEL DOCA PARAIBA, 100, CENTRO - SAO GONCALO DO AMARANTE / CE - CEP:62670000</Value>
                </Field>
              </LookupRow>
              <LookupRow>
                <LookupCell>
                  <Field $w={112} $top={1}><Label $ls={0.76}>CPF/CNPJ</Label><TextInput $w={112} defaultValue="09154990378" /></Field>
                  <LookupSpacer><RoundButton $size={24} aria-label="Buscar CPF/CNPJ"><Lens /></RoundButton></LookupSpacer>
                </LookupCell>
                <Field $w={192} $top={5}><Label>Cliente</Label><Value $ls={-0.1}>FCO.HELDER DE VASCONCELOS</Value></Field>
                <Field $top={5}>
                  <Label>Endereço do Cliente</Label>
                  <Value $ls={0.14}>RUA DOUTOR JOSE LOURENCO, 831, ALDEOTA - FORTALEZA / CE - CEP:60115282</Value>
                </Field>
              </LookupRow>
            </LookupRows>
            <InfoRow>
              <Field $w={106}><Label>Nº Contrato</Label><Value>42853532-101</Value></Field>
              <Field $w={125}><Label>Unidade</Label><Value>UN-BCL</Value></Field>
              <Field $w={122}><Label>Grupo</Label><Value $teal $ls={-0.11}>41-CONVENCIONAL</Value></Field>
              <Field $w={97}><Label>Início Vigência</Label><Value $ls={0.16}>29/05/2014</Value></Field>
              <Field $w={195}><Label>Fim Vigência</Label><Value $ls={0.6}>__/__ /____</Value></Field>
              <Field><Label>Pendência(s)</Label><Value $ls={0.07}>Não existe pendência.</Value></Field>
            </InfoRow>
            <InfoRow>
              <Field $w={106}><Label>Área Conurbada</Label><Value $ls={-0.4}>NÃO</Value></Field>
              <Field $w={125}><Label>Grande Consumidor</Label><Value $ls={-0.4}>NÃO</Value></Field>
              <Field $w={122}><Label $ls={0.14}>Débito Automático</Label><Value $ls={-0.4}>NÃO</Value></Field>
              <Field $w={97}><Label>Grande Cliente</Label><Value $ls={-0.4}>NÃO</Value></Field>
              <Field $w={195}><Label $ls={0.24}>Total do Débito até 29/05/2014</Label><Value><b>R$</b>&nbsp; 0,00</Value></Field>
              <Inline>
                <Field><Label $ls={0.14}>Imóvel Notificado</Label><Value $ls={-0.4}>NÃO</Value></Field>
                <RoundButton $size={24} aria-label="Ver notificação"><DocLens /></RoundButton>
              </Inline>
            </InfoRow>
            <Mark $x={1} $y={1} $w={138} $h={40} />
            <Mark $x={150} $y={34} $w={198} $h={48} />
          </ClientPanel>

          <ToolStrip>
            {tools.map((t) => <Tool key={t.name} name={t.name} gap={t.gap} />)}
            <MissingTool />
            <Tool name="Cobrança" />
            <Tool name="Relatórios" />
            <Tool name="Devedor" />
          </ToolStrip>

          <CardHeader>
            <CardTitle>Registrar Atendimento</CardTitle>
            <RoundButton $size={24} aria-label="Imprimir"><PrintDisc /></RoundButton>
            <RoundButton $size={24} aria-label="Recolher"><UpDisc /></RoundButton>
          </CardHeader>
          <CardBody>
            <Notice><InfoIcon /><NoticeText>Solicitar ao cliente seu email para contato.</NoticeText></Notice>
            <Form>
              <FormLabel>Email do Cliente</FormLabel>
              <TextInput $w={452} $gap={1} />
              <FormLabel $top={5}>Cliente não tem email</FormLabel>
              <Check type="checkbox" />
              <FormLabel $top={5} $ls={-0.05}>Cliente não quis informar email</FormLabel>
              <Check type="checkbox" />
            </Form>
            <ActionBar><Continue><u>C</u>ontinuar</Continue></ActionBar>
          </CardBody>
        </Main>
      </Workspace>

      <BlueRule />
      <AppFooter><CagecePine />Cagece</AppFooter>
      <TaskBar>
        <TaskItem $w={54}><Windows /></TaskItem>
        <TaskItem $w={70}><Explorer /></TaskItem>
        <TaskItem $w={54}><Folder /></TaskItem>
        <TaskItem $w={68}><Player /></TaskItem>
        <TaskItem $w={58}><Chrome /></TaskItem>
        <TaskItem $w={66}><RedHand /></TaskItem>
        <TaskItem $w={53} $active><Firefox s={32} /></TaskItem>
        <Stack />
        <TaskItem $w={59} $open><Writer /></TaskItem>
        <Tray>
          <TrayIcons />
          <Clock>13:46<br />29/05/2014</Clock>
          <ShowDesktop />
        </Tray>
      </TaskBar>
    </Screen>
  );
}
